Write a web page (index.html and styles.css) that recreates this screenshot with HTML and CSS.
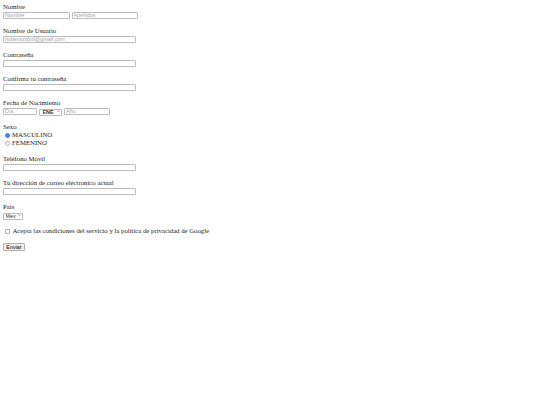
FILE: index.html
```html
<!DOCTYPE html>
<html lang="es">
<head>
<meta charset="utf-8">
<title>Registro</title>
<link rel="stylesheet" href="styles.css">
</head>
<body>
<form class="signup">
  <div class="section">
    <div class="label">Nombre</div>
    <div class="controls">
      <input type="text" class="field name" placeholder="Nombre">
      <input type="text" class="field name" placeholder="Apellidos">
    </div>
  </div>
  <div class="section">
    <div class="label">Nombre de Usuario</div>
    <div class="controls">
      <input type="text" class="field wide" placeholder="holamundod@gmail.com">
    </div>
  </div>
  <div class="section">
    <div class="label">Contraseña</div>
    <div class="controls">
      <input type="password" class="field wide">
    </div>
  </div>
  <div class="section">
    <div class="label">Confirma tu contraseña</div>
    <div class="controls">
      <input type="password" class="field wide">
    </div>
  </div>
  <div class="section">
    <div class="label">Fecha de Nacimiento</div>
    <div class="controls">
      <input type="text" class="field day" placeholder="Día">
      <span class="select-wrap month">
        <select class="select"><option>ENE</option><option>FEB</option><option>MAR</option></select>
        <svg class="chevron" viewBox="0 0 10 6"><path d="M1 1 L5 5 L9 1" fill="none" stroke="#444" stroke-width="1.6"/></svg>
      </span>
      <input type="text" class="field year" placeholder="Año">
    </div>
  </div>
  <div class="section">
    <div class="label">Sexo</div>
    <label class="option"><input type="radio" class="radio" name="sexo" checked>MASCULINO</label>
    <label class="option"><input type="radio" class="radio" name="sexo">FEMENINO</label>
  </div>
  <div class="section">
    <div class="label">Teléfono Móvil</div>
    <div class="controls">
      <input type="tel" class="field wide">
    </div>
  </div>
  <div class="section">
    <div class="label">Tu dirección de correo eléctronico actual</div>
    <div class="controls">
      <input type="email" class="field wide">
    </div>
  </div>
  <div class="section">
    <div class="label">País</div>
    <div class="controls">
      <span class="select-wrap country">
        <select class="select"><option>Mex</option><option>Arg</option><option>Esp</option></select>
        <svg class="chevron" viewBox="0 0 10 6"><path d="M1 1 L5 5 L9 1" fill="none" stroke="#444" stroke-width="1.6"/></svg>
      </span>
    </div>
  </div>
  <div class="section">
    <label class="option"><input type="checkbox" class="check">Acepta las condiciones del servicio y la política de privacidad de Google</label>
  </div>
  <div class="section">
    <button type="button" class="submit">Enviar</button>
  </div>
</form>
</body>
</html>
```

FILE: styles.css
```css
body {
  margin: 0;
  background: #ffffff;
}

.signup {
  padding: 3px;
  font-family: "Liberation Serif", "Times New Roman", serif;
  font-size: 6.75px;
  line-height: 8px;
  color: #1a1a1a;
}

.section {
  margin-bottom: 8px;
}

.label {
  height: 8px;
  line-height: 8.5px;
}

.controls {
  display: flex;
  align-items: flex-start;
  gap: 2px;
  height: 8px;
  padding-top: 0.5px;
  box-sizing: border-box;
}

.field {
  box-sizing: border-box;
  height: 7.5px;
  margin: 0;
  padding: 0 1px;
  border: 1px solid #bcbcbc;
  border-radius: 1px;
  background: #ffffff;
  font-family: "Liberation Sans", Arial, sans-serif;
  font-size: 5.4px;
  line-height: 5.5px;
  color: #000000;
  outline: none;
}

.field::placeholder {
  color: #a3a3a3;
}

.name {
  width: 66.5px;
}

.wide {
  width: 132.5px;
}

.day {
  width: 34px;
}

.year {
  width: 46px;
}

.select-wrap {
  position: relative;
  display: inline-block;
  height: 7.5px;
}

.month {
  width: 23px;
}

.country {
  width: 20px;
}

.select {
  appearance: none;
  -webkit-appearance: none;
  box-sizing: border-box;
  width: 100%;
  height: 7.5px;
  margin: 0;
  padding: 0 0 0 1.5px;
  border: 1px solid #bcbcbc;
  border-radius: 1px;
  background: #ffffff;
  font-family: "Liberation Sans", Arial, sans-serif;
  font-size: 5.4px;
  line-height: 5.5px;
  color: #333333;
  outline: none;
}

.month .select {
  font-weight: bold;
  padding-left: 2.5px;
}

.chevron {
  position: absolute;
  right: 2px;
  top: 2.6px;
  width: 3.2px;
  height: 2.2px;
  pointer-events: none;
}

.option {
  display: flex;
  align-items: center;
  height: 8px;
  line-height: 8px;
}

.radio {
  appearance: none;
  -webkit-appearance: none;
  box-sizing: border-box;
  width: 5px;
  height: 5px;
  margin: 0 2px 0 2px;
  border: 1px solid #b0b0b0;
  border-radius: 50%;
  background: #ffffff;
}

.radio:checked {
  border-color: #3a86f0;
  background: #3a86f0;
}

.check {
  appearance: none;
  -webkit-appearance: none;
  box-sizing: border-box;
  width: 5px;
  height: 5px;
  margin: 0 2.5px 0 2px;
  border: 1px solid #b0b0b0;
  border-radius: 1px;
  background: #ffffff;
}

.submit {
  box-sizing: border-box;
  width: 22px;
  height: 8px;
  margin: 0;
  padding: 0;
  border: 1px solid #b0b0b0;
  border-radius: 1px;
  background: #efefef;
  font-family: "Liberation Sans", Arial, sans-serif;
  font-size: 5.4px;
  line-height: 6px;
  color: #000000;
}
```
